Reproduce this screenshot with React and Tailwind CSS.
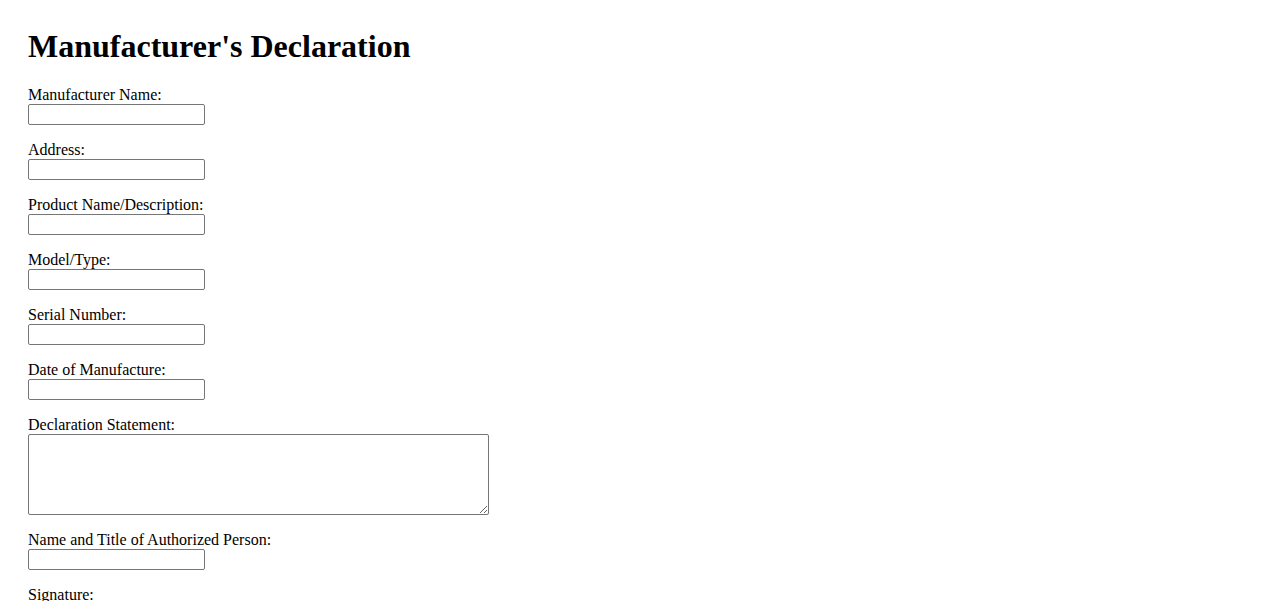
import React from "react";

const fields = [
  "Manufacturer Name:",
  "Address:",
  "Product Name/Description:",
  "Model/Type:",
  "Serial Number:",
  "Date of Manufacture:",
];

function Field({ label, textarea }) {
  return (
    <div className="flex flex-col items-start mb-[16px]">
      <label className="block h-[18px] leading-[18px] text-[16px]">{label}</label>
      {textarea ? (
        <textarea className="block w-[461px] h-[81px] border border-[#767676] rounded-[2px] bg-white resize" />
      ) : (
        <input
          type="text"
          className="block w-[177px] h-[21px] border border-[#767676] rounded-[2px] bg-white"
        />
      )}
    </div>
  );
}

export default function App() {
  return (
    <div
      className="min-h-screen bg-white text-black px-[28px] pt-[28px]"
      style={{ fontFamily: '"Liberation Serif", "Times New Roman", serif' }}
    >
      <h1 className="text-[32px] font-bold h-[37px] leading-[37px] mb-[21px]">
        Manufacturer's Declaration
      </h1>
      <form>
        {fields.map((f) => (
          <Field key={f} label={f} />
        ))}
        <Field label="Declaration Statement:" textarea />
        <Field label="Name and Title of Authorized Person:" />
        <Field label="Signature:" />
        <Field label="Date:" />
      </form>
    </div>
  );
}
